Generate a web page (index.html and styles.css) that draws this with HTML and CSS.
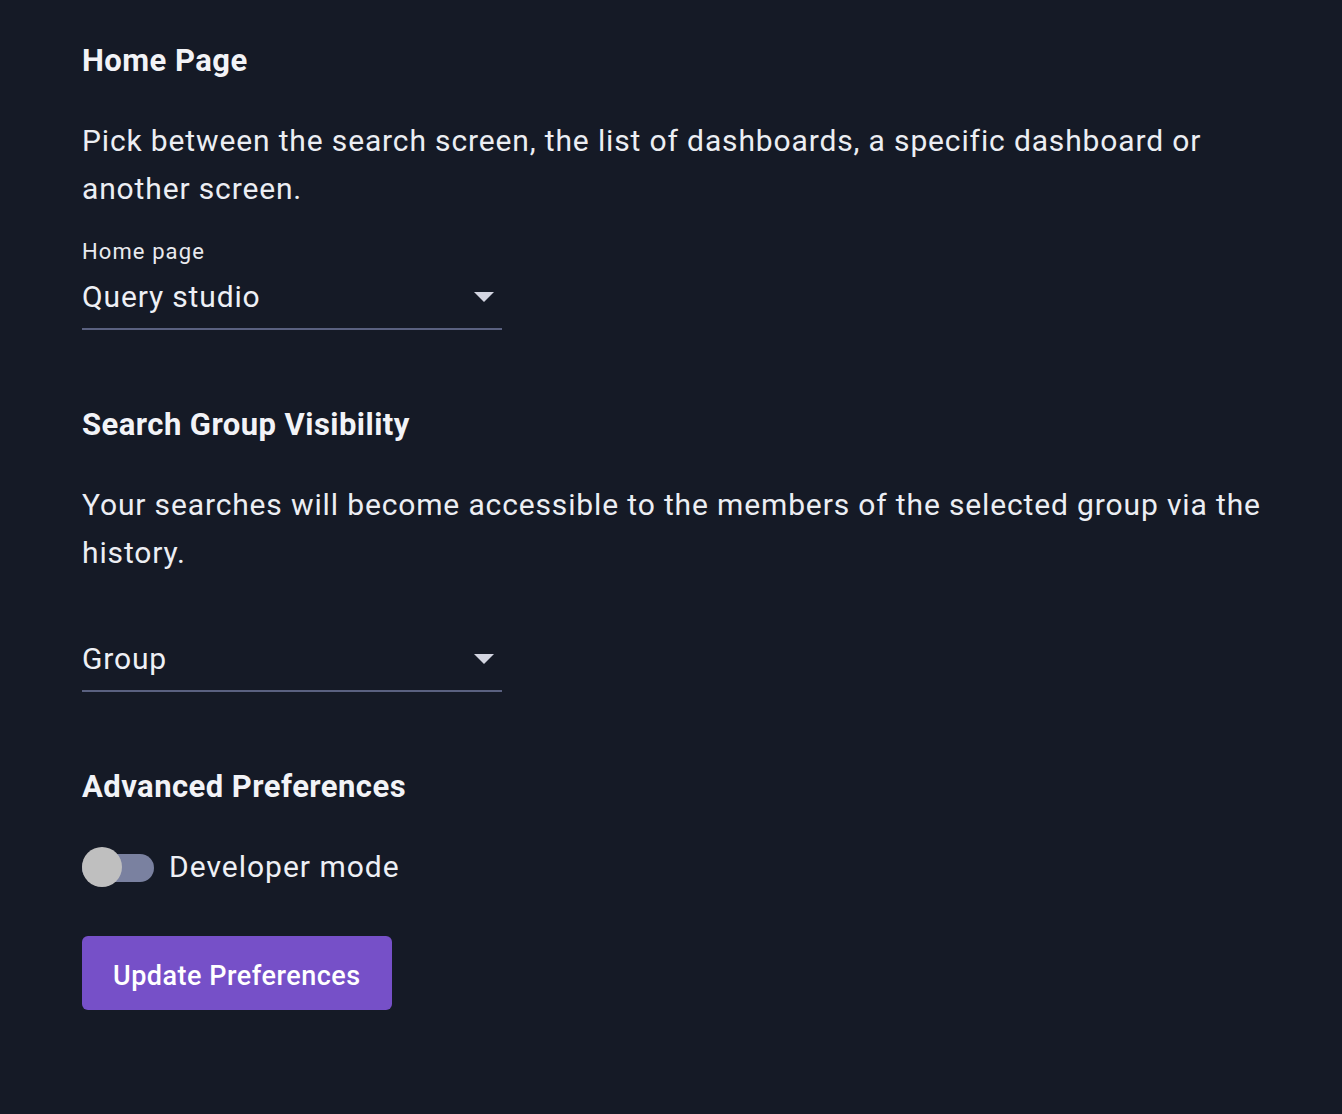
FILE: index.html
```html
<!DOCTYPE html>
<html lang="en">
<head>
<meta charset="utf-8">
<title>Preferences</title>
<link rel="stylesheet" href="styles.css">
</head>
<body>
<main class="prefs">
  <section class="section">
    <h2 class="section-title">Home Page</h2>
    <p class="section-text">Pick between the search screen, the list of dashboards, a specific dashboard or another screen.</p>
    <div class="field">
      <label class="field-label">Home page</label>
      <div class="select">
        <span class="select-value">Query studio</span>
        <svg class="select-arrow" width="20" height="10" viewBox="0 0 20 10"><path d="M0 0 L20 0 L10 10 Z"/></svg>
      </div>
    </div>
  </section>
  <section class="section">
    <h2 class="section-title">Search Group Visibility</h2>
    <p class="section-text">Your searches will become accessible to the members of the selected group via the history.</p>
    <div class="field field-nolabel">
      <span class="field-label"></span>
      <div class="select">
        <span class="select-value">Group</span>
        <svg class="select-arrow" width="20" height="10" viewBox="0 0 20 10"><path d="M0 0 L20 0 L10 10 Z"/></svg>
      </div>
    </div>
  </section>
  <section class="section">
    <h2 class="section-title">Advanced Preferences</h2>
    <div class="toggle-row">
      <span class="toggle"><span class="toggle-track"></span><span class="toggle-thumb"></span></span>
      <span class="toggle-label">Developer mode</span>
    </div>
    <button class="btn-primary" type="button">Update Preferences</button>
  </section>
</main>
</body>
</html>
```

FILE: styles.css
```css
html, body {
  margin: 0;
  padding: 0;
  background: #151a26;
}
body {
  font-family: Roboto, "Noto Sans", "Liberation Sans", sans-serif;
  color: #eef0f5;
  min-height: 1114px;
}
.prefs {
  width: 1200px;
  padding: 41px 0 0 82px;
  display: flex;
  flex-direction: column;
}
.section {
  display: flex;
  flex-direction: column;
  margin-bottom: 75px;
}
.section:last-child { margin-bottom: 0; }
.section-title {
  margin: 0;
  font-size: 31px;
  line-height: 40px;
  font-weight: 700;
  letter-spacing: 0.45px;
  color: #f2f3f7;
}
.section-text {
  margin: 36px 0 0;
  font-size: 30px;
  line-height: 48px;
  font-weight: 400;
  letter-spacing: 0.86px;
  color: #eceef3;
}
.field {
  margin-top: 24px;
  width: 420px;
  display: flex;
  flex-direction: column;
}
.field-nolabel { margin-top: 22px; }
.field-label {
  display: block;
  height: 30px;
  font-size: 22px;
  line-height: 30px;
  letter-spacing: 1.1px;
  color: #e9eaef;
}
.select {
  margin-top: 12px;
  display: flex;
  align-items: center;
  justify-content: space-between;
  height: 36px;
  padding-bottom: 13px;
  border-bottom: 2px solid #5a6180;
}
.select-value {
  font-size: 30px;
  line-height: 36px;
  letter-spacing: 0.85px;
  color: #eef0f5;
}
.select-arrow {
  fill: #d3d5e1;
  margin-right: 8px;
}
.toggle-row {
  margin-top: 40px;
  display: flex;
  align-items: center;
  height: 40px;
}
.toggle {
  position: relative;
  width: 72px;
  height: 40px;
  flex: none;
}
.toggle-track {
  position: absolute;
  left: 0;
  top: 7px;
  width: 72px;
  height: 28px;
  border-radius: 14px;
  background: #7a81a0;
}
.toggle-thumb {
  position: absolute;
  left: 0;
  top: 0;
  width: 40px;
  height: 40px;
  border-radius: 50%;
  background: #bfbfbf;
}
.toggle-label {
  margin-left: 15px;
  font-size: 30px;
  line-height: 40px;
  letter-spacing: 1px;
}
.btn-primary {
  margin-top: 49px;
  align-self: flex-start;
  height: 74px;
  padding: 5px 31px 0;
  border: 0;
  border-radius: 6px;
  background: #7650c8;
  color: #ffffff;
  font-family: Roboto, "Noto Sans", "Liberation Sans", sans-serif;
  font-size: 27px;
  font-weight: 500;
  letter-spacing: 0.5px;
  cursor: pointer;
}
```
